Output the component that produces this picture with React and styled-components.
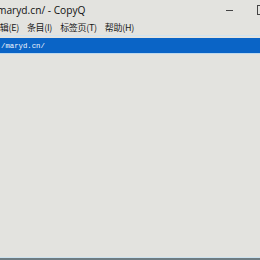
import React from 'react';
import styled, { createGlobalStyle } from 'styled-components';

const GlobalStyle = createGlobalStyle`
  html, body {
    margin: 0;
    padding: 0;
    width: 260px;
    height: 260px;
    overflow: hidden;
    background: #e3e3df;
  }
  #root {
    width: 260px;
    height: 260px;
  }
`;

const Window = styled.div`
  width: 260px;
  height: 260px;
  display: flex;
  flex-direction: column;
  overflow: hidden;
  background: #e3e3df;
  font-family: "Noto Sans CJK SC", "Noto Sans", sans-serif;
  color: #1a1a1a;
`;

const TitleBar = styled.div`
  height: 20px;
  display: flex;
  align-items: center;
  flex-shrink: 0;
`;

const Title = styled.div`
  flex: 1;
  font-family: "Open Sans", "Noto Sans", sans-serif;
  font-size: 10.2px;
  white-space: nowrap;
  margin-left: -3px;
  color: #111;
`;

const Controls = styled.div`
  display: flex;
  align-items: center;
  gap: 24px;
  margin-right: -7px;
`;

const MinBtn = styled.div`
  width: 7px;
  height: 1px;
  background: #444;
`;

const MaxBtn = styled.div`
  width: 8px;
  height: 8px;
  border: 1px solid #444;
`;

const MenuBar = styled.div`
  height: 14px;
  display: flex;
  align-items: center;
  gap: 8px;
  flex-shrink: 0;
  padding-bottom: 1px;
`;

const MenuItem = styled.div`
  font-size: 9px;
  letter-spacing: -0.3px;
  white-space: nowrap;
  color: #1a1a1a;
  margin-left: ${p => p.$offset || 0}px;
`;

const List = styled.div`
  flex: 1;
  display: flex;
  flex-direction: column;
  border-top: 1px solid #cfe3f0;
  border-bottom: 1px solid #cde2ee;
  padding-top: 2px;
`;

const Row = styled.div`
  height: 15px;
  display: flex;
  align-items: center;
  background: ${p => (p.$selected ? '#0a64c6' : 'transparent')};
  color: ${p => (p.$selected ? '#f4f8ff' : '#111')};
  font-family: "Liberation Mono", "DejaVu Sans Mono", monospace;
  font-size: 7.3px;
  white-space: nowrap;
  padding-left: 1px;
  border-bottom: 1px solid #bcd8ee;
`;

const BottomEdge = styled.div`
  height: 2px;
  flex-shrink: 0;
  background: #6e7c82;
`;

export default function App() {
  return (
    <>
      <GlobalStyle />
      <Window>
        <TitleBar>
          <Title>maryd.cn/ - CopyQ</Title>
          <Controls>
            <MinBtn />
            <MaxBtn />
          </Controls>
        </TitleBar>
        <MenuBar>
          <MenuItem $offset={-9}>编辑(E)</MenuItem>
          <MenuItem>条目(I)</MenuItem>
          <MenuItem>标签页(T)</MenuItem>
          <MenuItem>帮助(H)</MenuItem>
        </MenuBar>
        <List>
          <Row $selected>/maryd.cn/</Row>
        </List>
        <BottomEdge />
      </Window>
    </>
  );
}
